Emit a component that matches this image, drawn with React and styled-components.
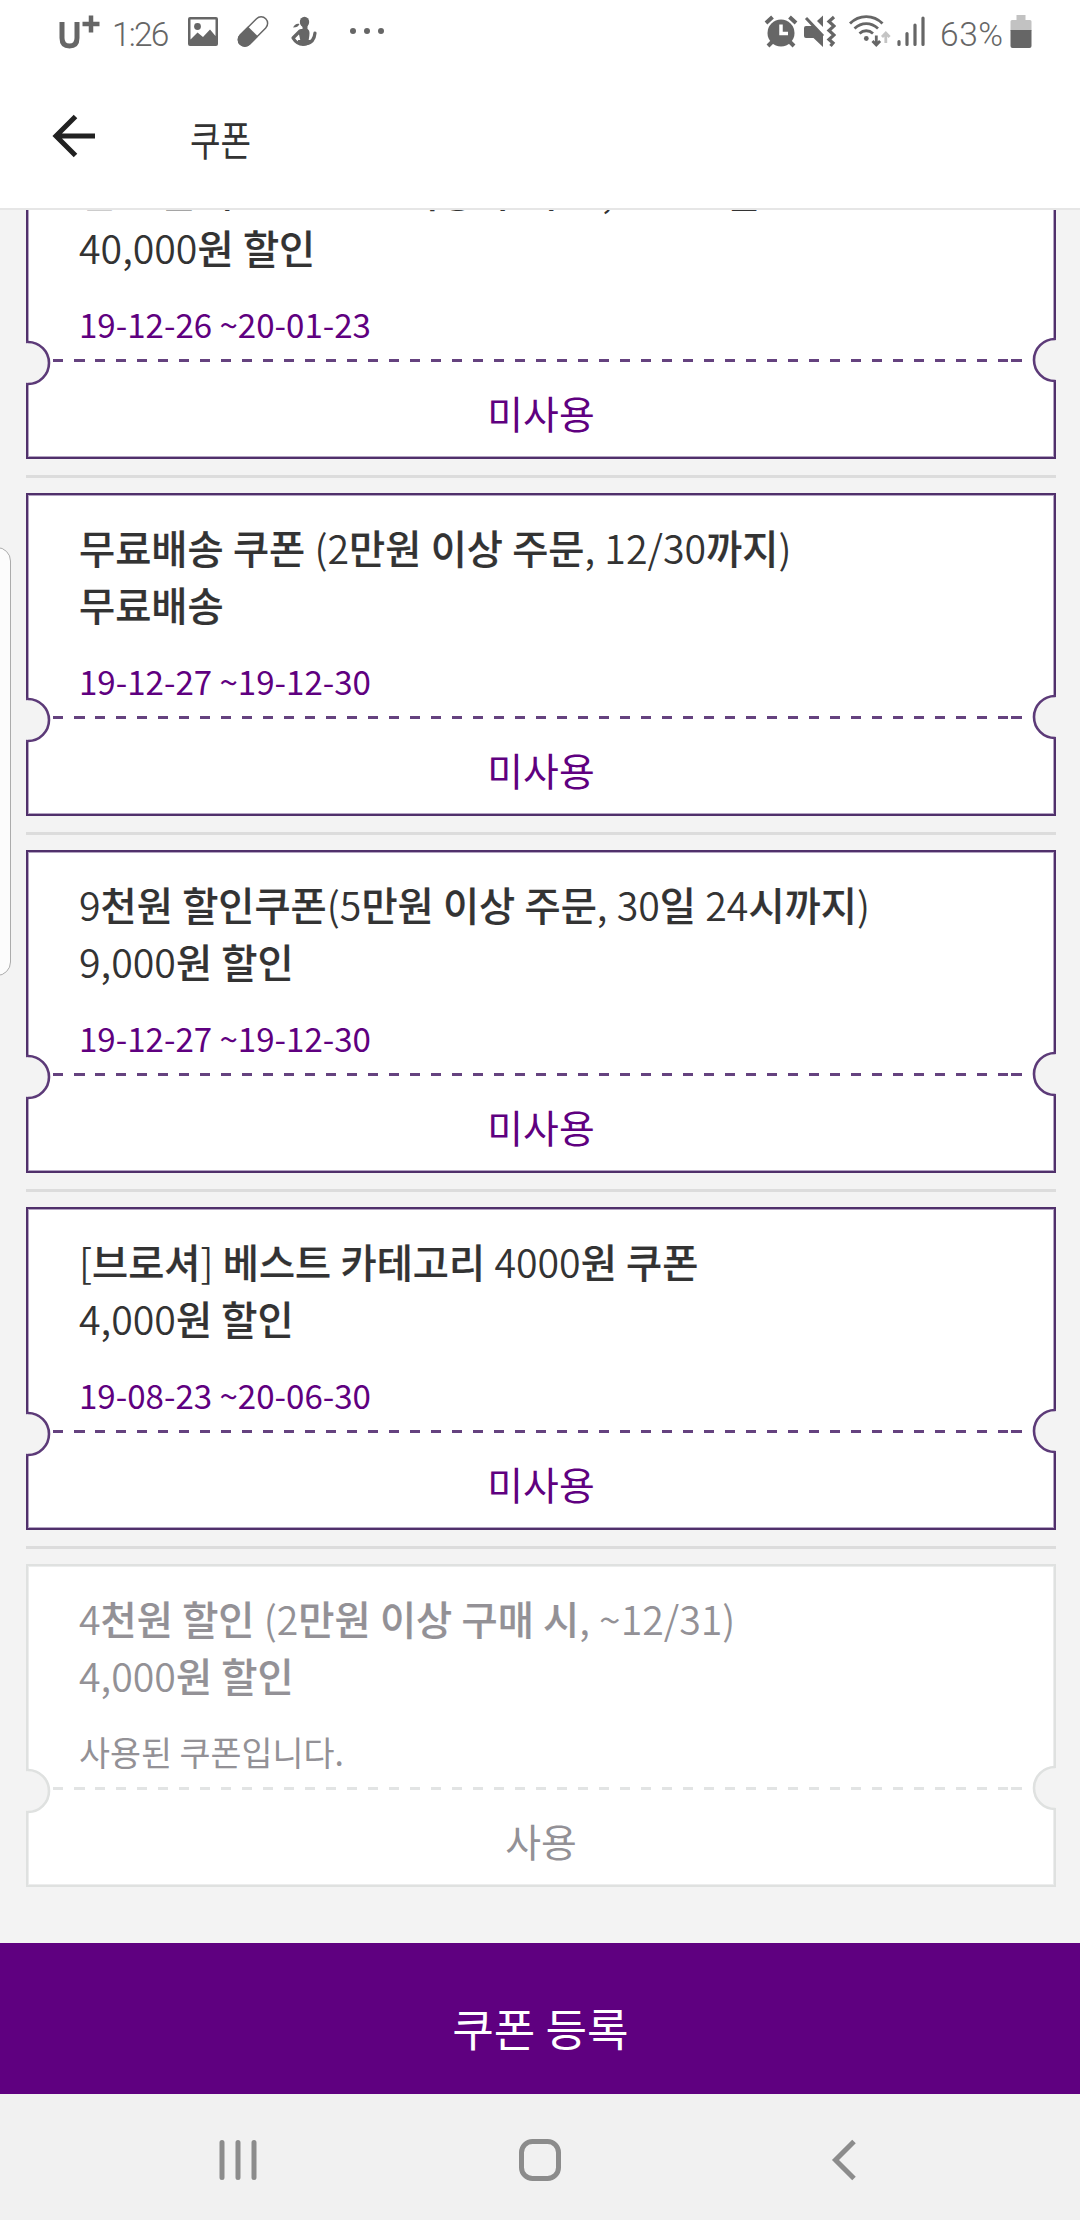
import React from 'react';
import styled, { createGlobalStyle } from 'styled-components';

const GlobalStyle = createGlobalStyle`
  * {
    box-sizing: border-box;
  }

  body {
    margin: 0;
    background: #f3f3f3;
    font-family: 'Noto Sans CJK KR', sans-serif;
    color: #333;
  }
`;

const Screen = styled.div`
  position: relative;
  display: flex;
  flex-direction: column;
  width: 1080px;
  height: 2220px;
  overflow: hidden;
`;

const StatusBar = styled.div`
  display: flex;
  justify-content: space-between;
  height: 64px;
  padding: 14px 48px 0 58px;
  background: #fff;
  color: #666;
`;

const StatusGroup = styled.div`
  display: flex;
  align-items: flex-start;
  height: 36px;
`;

const StatusText = styled.span`
  width: ${(props) => props.$width}px;
  margin-left: ${(props) => props.$left}px;
  font-family: Roboto, sans-serif;
  font-size: 33.5px;
  font-weight: 300;
  line-height: 42px;
  letter-spacing: ${(props) => props.$spacing}px;
  white-space: nowrap;
`;

const StatusIcon = styled.svg`
  flex: none;
  width: ${(props) => props.$width}px;
  height: 36px;
  margin-left: ${(props) => props.$left || 0}px;
`;

const Header = styled.header`
  display: flex;
  align-items: center;
  height: 146px;
  padding: 0 52px;
  background: #fff;
  border-bottom: 2px solid #e6e6e6;
`;

const BackIcon = styled.svg`
  width: 44px;
  height: 44px;
`;

const HeaderTitle = styled.h1`
  margin: 3px 0 0 94px;
  font-size: 41px;
  font-weight: 400;
  line-height: 60px;
  transform: scaleX(0.81);
  transform-origin: left center;
`;

const CouponList = styled.main`
  display: flex;
  flex-direction: column;
  justify-content: flex-end;
  height: 1733px;
  padding: 0 24px 56px 26px;
  overflow: hidden;
`;

const Separator = styled.div`
  flex: none;
  height: 3px;
  margin: 16px 0 15px;
  background: #dcdcdc;
`;

const Card = styled.article`
  position: relative;
  flex: none;
  display: flex;
  flex-direction: column;
  height: 323px;
  border: 2px solid ${(props) => (props.$used ? '#dfe1e0' : '#50306b')};
  background: #fff;
  box-shadow: inset 0 0 0 1px ${(props) => (props.$used ? '#eceded' : '#b3a3c2')};
  color: ${(props) => (props.$used ? '#939196' : '#333')};
`;

const CardInfo = styled.div`
  height: 221px;
  padding: 23px 51px 0;
`;

const CardTitle = styled.p`
  margin: 0;
  font-size: 39.3px;
  font-weight: 350;
  line-height: 57px;
  word-spacing: 0.5px;
  white-space: nowrap;
`;

const Hangul = styled.span`
  font-weight: 500;
  -webkit-text-stroke: 0.2px currentColor;
`;

const CardPeriod = styled.p`
  margin: 25px 0 0;
  font-size: ${(props) => (props.$used ? 33.7 : 33.1)}px;
  line-height: 48px;
  color: ${(props) => (props.$used ? '#939196' : '#5f0080')};
`;

const DashRow = styled.div`
  display: flex;
  gap: 10.5px;
  height: 3px;
  padding: 0 32px 0 24.5px;
`;

const Dash = styled.div`
  width: 10.5px;
  background: ${(props) => (props.$used ? '#e2e4e4' : '#65427f')};
`;

const DashLine = styled.div`
  width: 935px;
  margin-right: -8px;
  background: repeating-linear-gradient(
    to right,
    ${(props) => (props.$used ? '#e2e4e4' : '#65427f')} 0 10.5px,
    transparent 10.5px 21px
  );
`;

const Notch = styled.svg`
  position: absolute;
  width: 26px;
  height: 48px;
  ${(props) => (props.$side === 'left' ? 'left: -2px; top: 201px;' : 'right: -2px; top: 198px;')}
`;

const CardStatus = styled.p`
  margin: 21px 0 0;
  font-size: 38.9px;
  line-height: 58px;
  text-align: center;
  color: ${(props) => (props.$used ? '#939196' : '#5f0080')};
`;

const RegisterButton = styled.button`
  height: 151px;
  padding: 18px 0 0 1px;
  border: 0;
  background: #5f0080;
  color: #fff;
  font-family: inherit;
  font-size: 45.2px;
  line-height: 66px;
`;

const NavBar = styled.nav`
  display: flex;
  justify-content: space-between;
  align-items: center;
  height: 126px;
  padding: 6px 218px 0;
  background: #f1f1f1;
`;

const NavIcon = styled.svg`
  width: 42px;
  height: 44px;
`;

const EdgeHandle = styled.div`
  position: absolute;
  left: -20px;
  top: 547px;
  width: 31px;
  height: 429px;
  border: 1px solid #ababab;
  border-radius: 14px;
  background: #fcfcfc;
`;

const coupons = [
  {
    title: '설 선물세트 30만원 이상 구매 시, 4만원 할인',
    benefit: '40,000원 할인',
    period: '19-12-26 ~20-01-23',
  },
  {
    title: '무료배송 쿠폰 (2만원 이상 주문, 12/30까지)',
    benefit: '무료배송',
    period: '19-12-27 ~19-12-30',
  },
  {
    title: '9천원 할인쿠폰(5만원 이상 주문, 30일 24시까지)',
    benefit: '9,000원 할인',
    period: '19-12-27 ~19-12-30',
  },
  {
    title: '[브로셔] 베스트 카테고리 4000원 쿠폰',
    benefit: '4,000원 할인',
    period: '19-08-23 ~20-06-30',
  },
  {
    title: '4천원 할인 (2만원 이상 구매 시, ~12/31)',
    benefit: '4,000원 할인',
    period: '사용된 쿠폰입니다.',
    used: true,
  },
];

// Hangul is set heavier than digits and punctuation
function MixedText({ text }) {
  return text
    .split(/([가-힣]+)/)
    .filter(Boolean)
    .map((part, i) => (/[가-힣]/.test(part) ? <Hangul key={i}>{part}</Hangul> : part));
}

function CardNotch({ side, used }) {
  const cx = side === 'left' ? 2 : 25;
  return (
    <Notch $side={side} viewBox="0 0 26 48">
      <rect x={side === 'left' ? 0 : 23} y="4" width="3" height="40" fill="#f3f3f3" />
      <circle
        cx={cx}
        cy="24"
        r="21"
        fill="#f3f3f3"
        stroke={used ? '#dfe1e0' : '#5c3a78'}
        strokeWidth="2.6"
      />
      <rect x={side === 'left' ? 0 : 25} y="4.5" width={side === 'left' ? 2 : 1} height="39" fill="#f3f3f3" />
    </Notch>
  );
}

function Coupon({ coupon }) {
  const { title, benefit, period, used } = coupon;
  return (
    <Card $used={used}>
      <CardInfo>
        <CardTitle><MixedText text={title} /></CardTitle>
        <CardTitle><MixedText text={benefit} /></CardTitle>
        <CardPeriod $used={used}>{period}</CardPeriod>
      </CardInfo>
      <DashRow>
        <Dash $used={used} />
        <DashLine $used={used} />
        <Dash $used={used} />
      </DashRow>
      <CardStatus $used={used}>{used ? '사용' : '미사용'}</CardStatus>
      <CardNotch side="left" used={used} />
      <CardNotch side="right" used={used} />
    </Card>
  );
}

function StatusIcons() {
  return (
    <StatusBar>
      <StatusGroup>
        {/* carrier logo */}
        <StatusIcon $width={42} viewBox="0 0 42 36" fill="none" stroke="#666">
          <path d="M4 8v16c0 5 2.500 8 7.500 8s7.500-3 7.500-8V8" strokeWidth="5" />
          <path d="M24.500 10h17M33 1.500v17" strokeWidth="4.500" />
        </StatusIcon>
        <StatusText $width={58} $left={12} $spacing={-1.8}>1:26</StatusText>
        <StatusIcon $width={32} $left={17} viewBox="0 0 32 36" fill="#666">
          <path
            fillRule="evenodd"
            d="M3 3h26a2 2 0 0 1 2 2v25a2 2 0 0 1-2 2H3a2 2 0 0 1-2-2V5a2 2 0 0 1 2-2zm.5 2.500v20l7-7 5.500 4.500 7-7.500 5.500 6.500V5.500z"
          />
          <circle cx="10.500" cy="12.500" r="3.400" />
        </StatusIcon>
        <StatusIcon $width={34} $left={17} viewBox="0 0 34 36">
          <g transform="translate(17 17.500) rotate(-45)">
            <rect x="-18" y="-6.500" width="36" height="13" rx="6.500" fill="none" stroke="#666" strokeWidth="1.500" />
            <path d="M0-7.200h-11.500a7.200 7.200 0 0 0 0 14.400H0z" fill="#666" />
          </g>
        </StatusIcon>
        <StatusIcon $width={28} $left={20} viewBox="0 0 28 36" fill="#666">
          <ellipse cx="14.500" cy="8" rx="4.700" ry="5.200" />
          <path d="M12.500 11h5v5h-5z" />
          <path d="M3 13.500c1.500-3 4-4.500 6.500-3.500-1 2.500-3 3.500-6.500 3.500z" />
          <path d="M10.500 15h7c2 1 2.300 3 1.800 7l-1 6.500h-7.500l-2-9z" />
          <path d="M10 17L3 24c3 5 8 7 13 6s8.500-5 9-11" fill="none" stroke="#666" strokeWidth="3.200" strokeLinecap="round" strokeLinejoin="round" />
          <path d="M8 26h12v4c-4 2-8 2-12-1z" />
        </StatusIcon>
        <StatusIcon $width={36} $left={31} viewBox="0 0 36 36" fill="#666">
          <circle cx="4" cy="17" r="3" />
          <circle cx="18" cy="17" r="3" />
          <circle cx="32" cy="17" r="3" />
        </StatusIcon>
      </StatusGroup>
      <StatusGroup>
        <StatusIcon $width={34} viewBox="0 0 34 36">
          <circle cx="17" cy="19" r="13.500" fill="#666" />
          <path d="M2 9l6.500-6M32 9l-6.500-6" stroke="#666" strokeWidth="4" />
          <path d="M8 28l-4 4M26 28l4 4" stroke="#666" strokeWidth="4" />
          <path d="M17 10.500v9h7" fill="none" stroke="#fff" strokeWidth="3.500" />
        </StatusIcon>
        <StatusIcon $width={33} $left={5} viewBox="0 0 33 36" fill="#666">
          <path d="M1 14a2 2 0 0 1 2-2h7l10 10v11l-9.500-9H3a2 2 0 0 1-2-2z" />
          <path d="M3 4l17 18" stroke="#666" strokeWidth="3" />
          <path d="M14 7l6-5.500V13z" />
          <path d="M31 3l-5 4.500 5 4.500-5 4.500 5 4.500-5 4.500 4 3.500-2.500 3" fill="none" stroke="#666" strokeWidth="3.200" />
        </StatusIcon>
        <StatusIcon $width={43} $left={12} viewBox="0 0 43 36" fill="none" stroke="#666">
          <path d="M2 9.500c9-9.300 23.500-9.300 32.500 0M6.500 14.500c7-6.500 16.500-6.500 23.500 0M11.500 19.500c4-3.700 9.500-3.700 13.500 0" strokeWidth="2.800" />
          <circle cx="18.300" cy="24.500" r="2.400" fill="#666" stroke="none" />
          <path d="M28.300 21.500v9M24.500 27l3.800 4 3.800-4" strokeWidth="2.800" />
          <path d="M37.800 29V20M34 23l3.800-4 3.800 4" stroke="#c4c4c4" strokeWidth="2.800" />
        </StatusIcon>
        <StatusIcon $width={28} $left={6} viewBox="0 0 28 36" stroke="#666" strokeWidth="3.200" strokeLinecap="round">
          <path d="M2 27.500v3M10 19.500v11M18 11v19.500M26 4v26.500" />
        </StatusIcon>
        <StatusText $width={66} $left={15} $spacing={0.6}>63%</StatusText>
        <StatusIcon $width={22} $left={4} viewBox="0 0 22 36">
          <path d="M6.500 1h9v5H20a1.500 1.500 0 0 1 1.500 1.500V17h-21V7.500A1.500 1.500 0 0 1 2 6h4.500z" fill="#c2c2c2" />
          <path d="M.5 16h21v16a2 2 0 0 1-2 2h-17a2 2 0 0 1-2-2z" fill="#666" />
        </StatusIcon>
      </StatusGroup>
    </StatusBar>
  );
}

function App() {
  return (
    <Screen>
      <GlobalStyle />
      <StatusIcons />
      <Header>
        <BackIcon viewBox="0 0 44 44" fill="none" stroke="#212121" strokeWidth="5">
          <path d="M43 22H5M23.500 2.500L4 22l19.500 19.500" />
        </BackIcon>
        <HeaderTitle>쿠폰</HeaderTitle>
      </Header>
      <CouponList>
        {coupons.map((coupon, i) => (
          <React.Fragment key={coupon.title}>
            {i > 0 && <Separator />}
            <Coupon coupon={coupon} />
          </React.Fragment>
        ))}
      </CouponList>
      <RegisterButton>쿠폰 등록</RegisterButton>
      <NavBar>
        <NavIcon viewBox="0 0 42 44" stroke="#8c8c8c" strokeWidth="5" strokeLinecap="round">
          <path d="M4 4.500v35M20 4.500v35M36 4.500v35" />
        </NavIcon>
        <NavIcon viewBox="0 0 42 44" fill="none" stroke="#8c8c8c" strokeWidth="5">
          <rect x="2.500" y="3.500" width="37" height="37" rx="11" />
        </NavIcon>
        <NavIcon viewBox="0 0 42 44" fill="none" stroke="#8c8c8c" strokeWidth="5">
          <path d="M34 3.500L15.500 22 34 40.500" />
        </NavIcon>
      </NavBar>
      <EdgeHandle />
    </Screen>
  );
}

export default App;
